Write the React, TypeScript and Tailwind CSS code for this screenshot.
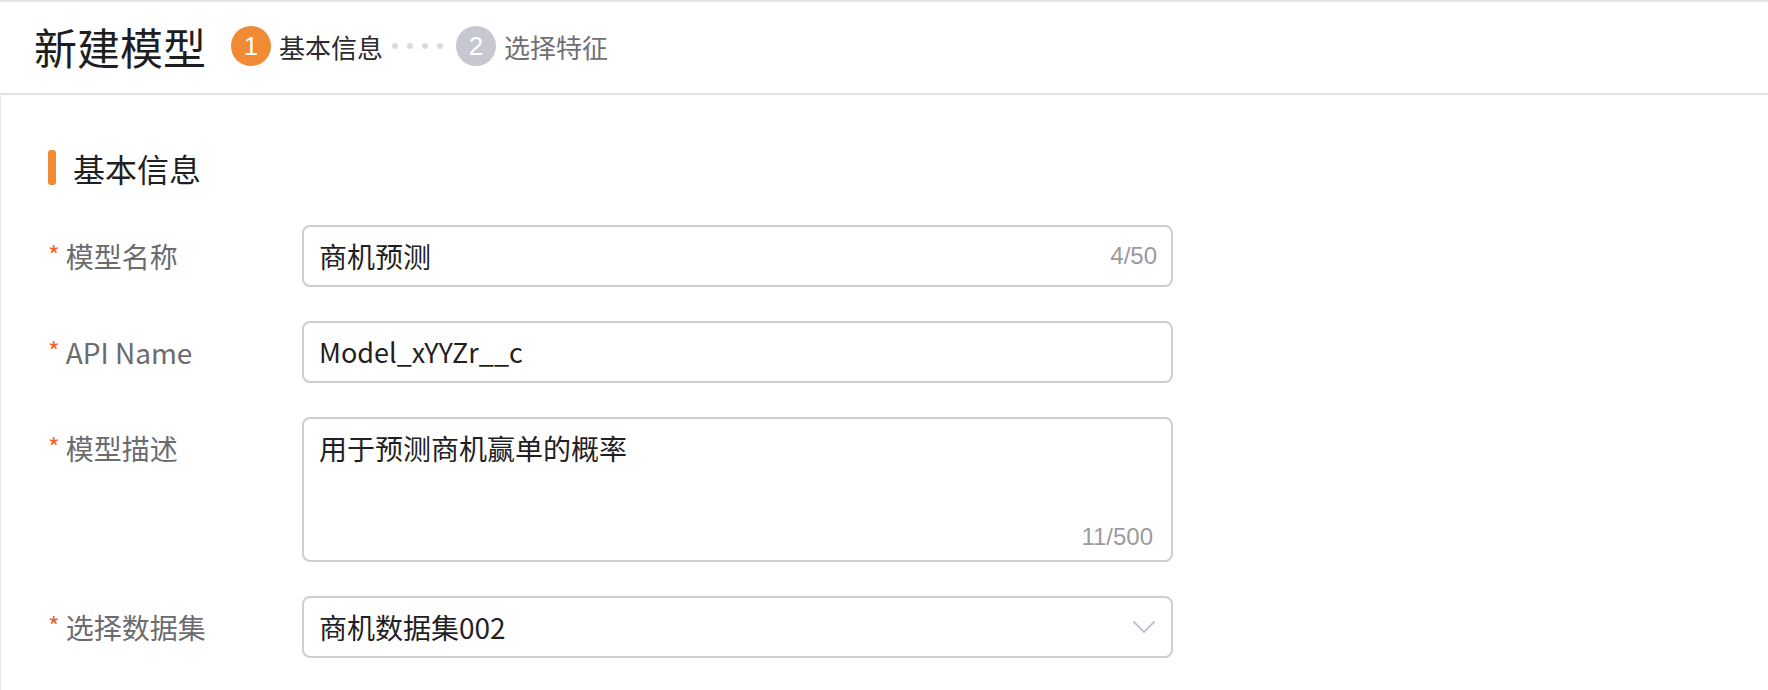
const cjk = { fontFamily: '"Noto Sans CJK SC", "Noto Sans", sans-serif' };

function Label({ text }: { text: string }) {
  return (
    <div className="w-[254px] h-[62px] shrink-0 flex items-center">
      <span className="text-[#f0642e] text-[25px] leading-none -mt-[4px] mr-[6px]">*</span>
      <span className="text-[28px] text-[#6b6b70]">{text}</span>
    </div>
  );
}

export default function App() {
  return (
    <div className="w-[1768px] h-[690px] bg-white overflow-hidden" style={cjk}>
      {/* header */}
      <div className="h-[95px] border-t-2 border-t-[#e4e4e8] border-b-2 border-b-[#e2e1e8] flex items-center pl-[34px] pb-[3px]">
        <h1 className="text-[43px] text-[#1e1e22] leading-none">新建模型</h1>
        <div className="flex items-center ml-[25px]">
          <span className="w-[40px] h-[40px] rounded-full bg-[#f08a34] text-white flex items-center justify-center text-[26px] font-['Liberation_Sans']">
            1
          </span>
          <span className="ml-[8px] text-[26px] text-[#2a2a2e]">基本信息</span>
          <div className="flex items-center gap-[9px] ml-[9px]">
            <span className="w-[6px] h-[6px] rounded-full bg-[#d9dae0]" />
            <span className="w-[6px] h-[6px] rounded-full bg-[#d9dae0]" />
            <span className="w-[6px] h-[6px] rounded-full bg-[#d9dae0]" />
            <span className="w-[6px] h-[6px] rounded-full bg-[#d9dae0]" />
          </div>
          <span className="ml-[13px] w-[40px] h-[40px] rounded-full bg-[#c6c7cf] text-white flex items-center justify-center text-[26px] font-['Liberation_Sans']">
            2
          </span>
          <span className="ml-[8px] text-[26px] text-[#6f6f75]">选择特征</span>
        </div>
      </div>

      {/* body */}
      <div className="border-l border-[#e8e8ec] h-[595px] pl-[47px] pt-[55px]">
        <div className="flex items-center h-[35px]">
          <span className="w-[8px] h-[35px] rounded-[3px] bg-[#f08a34]" />
          <span className="ml-[17px] text-[32px] text-[#1f1f24] leading-none">基本信息</span>
        </div>

        <div className="flex flex-col gap-[34px] mt-[40px]">
          <div className="flex items-start">
            <Label text="模型名称" />
            <div className="w-[871px] h-[62px] border-2 border-[#cdced6] rounded-[8px] flex items-center justify-between pl-[15px] pr-[14px]">
              <span className="text-[28px] text-[#1f1f24]">商机预测</span>
              <span className="text-[24px] text-[#9a9aa0] font-['Liberation_Sans']">4/50</span>
            </div>
          </div>

          <div className="flex items-start">
            <Label text="API Name" />
            <div className="w-[871px] h-[62px] border-2 border-[#cdced6] rounded-[8px] flex items-center pl-[15px]">
              <span className="text-[27px] text-[#1f1f24]">Model_xYYZr__c</span>
            </div>
          </div>

          <div className="flex items-start">
            <Label text="模型描述" />
            <div className="relative w-[871px] h-[145px] border-2 border-[#cdced6] rounded-[8px] px-[15px] pt-[9px]">
              <div className="text-[28px] leading-[40px] text-[#1f1f24]">用于预测商机赢单的概率</div>
              <span className="absolute right-[18px] bottom-[9px] text-[24px] leading-[28px] text-[#9a9aa0] font-['Liberation_Sans']">
                11/500
              </span>
            </div>
          </div>

          <div className="flex items-start">
            <Label text="选择数据集" />
            <div className="w-[871px] h-[62px] border-2 border-[#cdced6] rounded-[8px] flex items-center justify-between pl-[15px] pr-[16px]">
              <span className="text-[28px] text-[#1f1f24]">商机数据集002</span>
              <svg width="22" height="12" viewBox="0 0 22 12" fill="none">
                <path d="M1 1l10 10L21 1" stroke="#c3c4cc" strokeWidth="2" strokeLinecap="round" strokeLinejoin="round" />
              </svg>
            </div>
          </div>
        </div>
      </div>
    </div>
  );
}
